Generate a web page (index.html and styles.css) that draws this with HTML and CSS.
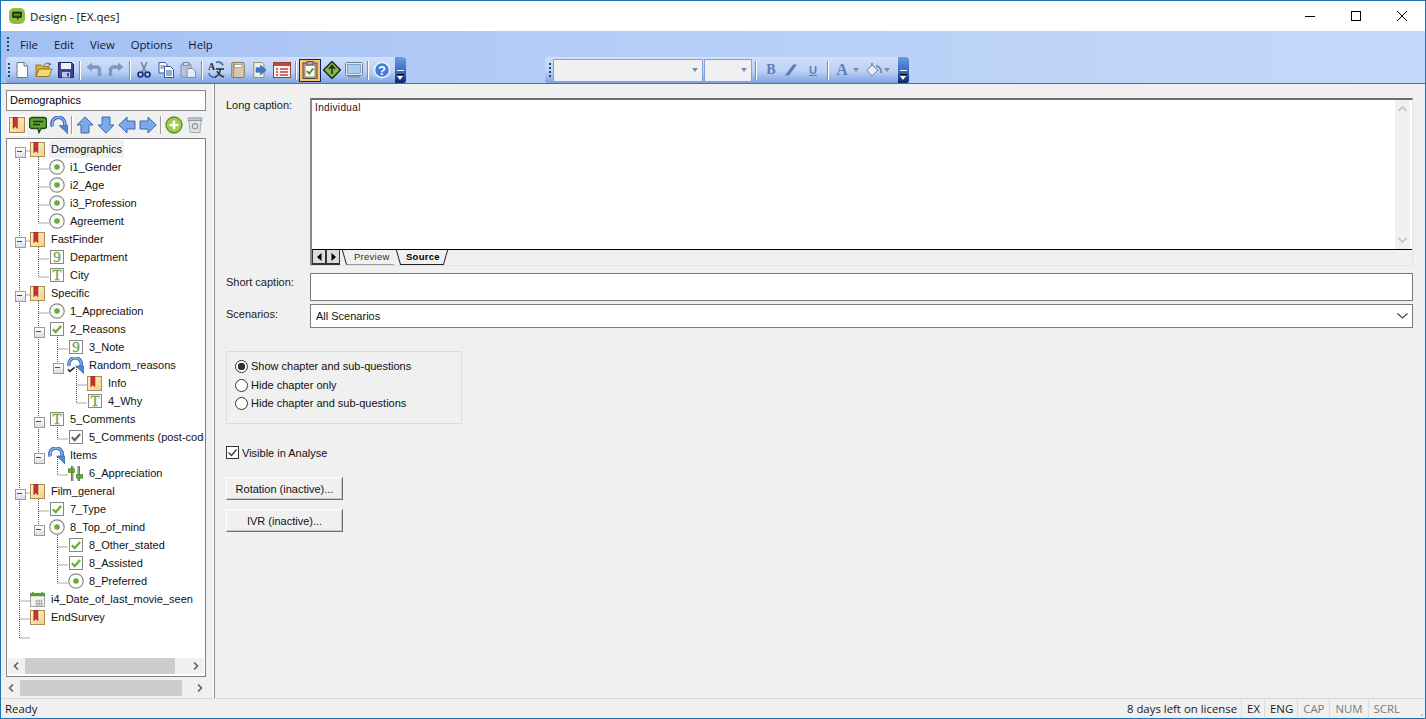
FILE: index.html
```html
<!DOCTYPE html>
<html lang="en">
<head>
<meta charset="utf-8">
<title>Design - [EX.qes]</title>
<link rel="stylesheet" href="styles.css">
</head>
<body>
<svg class="defs" width="0" height="0" aria-hidden="true">
<defs>
<linearGradient id="tan" x1="0" y1="0" x2="1" y2="1"><stop offset="0" stop-color="#fff4cf"/><stop offset="1" stop-color="#f3cf86"/></linearGradient>
<symbol id="i-book" viewBox="0 0 16 16"><rect x=".5" y=".5" width="15" height="15" fill="url(#tan)" stroke="#a9874f"/><path d="M4 0h4.500v11.500L6.200 9.500 4 11.500z" fill="#c8342e" stroke="#8e1f1c" stroke-width=".5"/></symbol>
<symbol id="i-radio" viewBox="0 0 16 16"><circle cx="8" cy="8" r="7.200" fill="#fdfdfd" stroke="#8a8a8a" stroke-width="1.200"/><circle cx="8" cy="8" r="2.800" fill="#6cab3a"/></symbol>
<symbol id="i-check" viewBox="0 0 14 14"><rect x=".5" y=".5" width="13" height="13" fill="#fdfdfd" stroke="#888"/><path d="M2.800 7.200l2.900 2.900 5.400-6" fill="none" stroke="#6cab3a" stroke-width="2.200"/></symbol>
<symbol id="i-gcheck" viewBox="0 0 14 14"><rect x=".5" y=".5" width="13" height="13" fill="#fdfdfd" stroke="#888"/><path d="M2.800 7.200l2.900 2.900 5.400-6" fill="none" stroke="#666" stroke-width="2.200"/></symbol>
<symbol id="i-nine" viewBox="0 0 14 14"><rect x=".5" y=".5" width="13" height="13" fill="#fdfdfd" stroke="#888"/><text x="7" y="11.500" class="glyph">9</text></symbol>
<symbol id="i-t" viewBox="0 0 14 14"><rect x=".5" y=".5" width="13" height="13" fill="#fdfdfd" stroke="#888"/><text x="7" y="11.500" class="glyph">T</text></symbol>
<symbol id="i-loop" viewBox="0 0 18 18"><path d="M2.500 10A6.500 6.500 0 1 1 14.500 10" fill="none" stroke="#2f62ad" stroke-width="3.600"/><path d="M2.500 10A6.500 6.500 0 1 1 14.500 10" fill="none" stroke="#8db7ec" stroke-width="1.600"/><path d="M9 9.500h9v8.500z" fill="#4f86d2" stroke="#2f62ad" stroke-width=".6"/></symbol>
<symbol id="i-loopcheck" viewBox="0 0 18 18"><path d="M2.500 9.500A6.500 6.500 0 1 1 14.500 10" fill="none" stroke="#2f62ad" stroke-width="3.600"/><path d="M2.500 9.500A6.500 6.500 0 1 1 14.500 10" fill="none" stroke="#8db7ec" stroke-width="1.600"/><path d="M9 9.500h9v8.500z" fill="#4f86d2" stroke="#2f62ad" stroke-width=".6"/><path d="M1 13l2.200 2.200L8 11" fill="none" stroke="#333" stroke-width="1.800"/></symbol>
<symbol id="i-slider" viewBox="0 0 16 16"><path d="M4.500 0v16M11.500 0v16" stroke="#444" stroke-width="2.400"/><path d="M4.500 0v16M11.500 0v16" stroke="#ddd" stroke-width=".8"/><rect x="0" y="3" width="7" height="4" fill="#62a92e" stroke="#3e7c1a" stroke-width=".6"/><rect x="9" y="9" width="7" height="4" fill="#62a92e" stroke="#3e7c1a" stroke-width=".6"/></symbol>
<symbol id="i-cal" viewBox="0 0 16 16"><rect x=".5" y="1.500" width="15" height="14" fill="#f4f4f4" stroke="#999"/><rect x="0" y="1" width="16" height="3.500" fill="#55a12a"/><path d="M3 0v2M13 0v2" stroke="#55a12a" stroke-width="1.600"/><path d="M5.500 9.500h8M5.500 12h8M5.500 14h8M7.500 8v6M10 8v6M12.500 8v6" stroke="#9a9a9a" stroke-width=".8" fill="none"/></symbol>
<symbol id="t-new" viewBox="0 0 16 16"><path d="M3 .5h7l3.500 3.500v11.500H3z" fill="#fdfdfd" stroke="#6d7a8c"/><path d="M10 .5V4h3.500" fill="#d7e2f2" stroke="#6d7a8c"/></symbol>
<symbol id="t-open" viewBox="0 0 18 16"><path d="M1 3h5l1.500 1.500H14V7H4L1 14z" fill="#e2b340" stroke="#9b7420"/><path d="M1 14.500l3-7.500h13l-3 7.500z" fill="#f8d873" stroke="#9b7420"/><path d="M9 3.500C10 1 13 .5 15 2" fill="none" stroke="#567" stroke-width="1"/><path d="M14 .5l2.500 2-3 1z" fill="#567"/></symbol>
<symbol id="t-save" viewBox="0 0 16 16"><path d="M.5.5h13l2 2v13H.5z" fill="#43439b" stroke="#23235f"/><rect x="3" y="1" width="10" height="6" fill="#eef1fa"/><rect x="4" y="10" width="8" height="5.500" fill="#c3c6dd"/><rect x="9" y="11" width="2" height="3.500" fill="#43439b"/></symbol>
<symbol id="t-undo" viewBox="0 0 16 16"><path d="M13.500 14V8A3 3 0 0 0 10.500 5H3" fill="none" stroke="#8098bd" stroke-width="3.400"/><path d="M6 .5v9L.5 5z" fill="#8098bd"/></symbol>
<symbol id="t-redo" viewBox="0 0 16 16"><path d="M2.500 14V8A3 3 0 0 1 5.500 5H13" fill="none" stroke="#8098bd" stroke-width="3.400"/><path d="M10 .5v9L15.500 5z" fill="#8098bd"/></symbol>
<symbol id="t-cut" viewBox="0 0 16 16"><path d="M5 0l4.800 10M11 0L6.200 10" stroke="#77808c" stroke-width="1.500"/><circle cx="4.500" cy="12.500" r="2.500" fill="none" stroke="#1f2a78" stroke-width="1.600"/><circle cx="11.500" cy="12.500" r="2.500" fill="none" stroke="#1f2a78" stroke-width="1.600"/></symbol>
<symbol id="t-copy" viewBox="0 0 16 16"><path d="M1 .5h6l2 2V11H1z" fill="#fff" stroke="#34549c"/><path d="M6.500 4.500h6l3 3v8h-9z" fill="#fff" stroke="#34549c"/><path d="M8 9h6M8 11h6M8 13h6M2.500 4h4M2.500 6h3" stroke="#34549c"/></symbol>
<symbol id="t-paste" viewBox="0 0 16 16"><rect x="1" y="2" width="10" height="13" rx="1" fill="#b7c3d8" stroke="#7d8ca8"/><rect x="3.500" y=".5" width="5" height="3" fill="#d4dce9" stroke="#7d8ca8"/><path d="M7 6.500h6l2.500 2.500v6.500H7z" fill="#e6ebf3" stroke="#7d8ca8"/></symbol>
<symbol id="t-trans" viewBox="0 0 18 18"><text x="1" y="9" class="tglyph">A</text><path d="M9 1.500a5 5 0 0 1 7 3" fill="none" stroke="#3d74c0" stroke-width="1.800"/><path d="M2 12a5 5 0 0 0 7 4" fill="none" stroke="#3d74c0" stroke-width="1.800"/><path d="M9 8h8M13 8v2c0 2-2 5-5 6M10 10c1 3 4 5 7 6" fill="none" stroke="#2b2b2b" stroke-width="1.400"/></symbol>
<symbol id="t-book2" viewBox="0 0 16 18"><rect x="1" y=".5" width="14" height="17" rx="1" fill="#d8c7aa" stroke="#7b6a50"/><rect x="4" y="3" width="8" height="3" fill="#fff" stroke="#8c7a5f" stroke-width=".6"/><path d="M3 .5v17" stroke="#9c8a6c"/></symbol>
<symbol id="t-export" viewBox="0 0 17 18"><path d="M1.500.5h9l2.500 2.500v14.500H1.500z" fill="#f3efe3" stroke="#8a7f68"/><path d="M4 6.500h5V3.500L15.500 9 9 14.500v-3H4z" fill="#3f79cc" stroke="#2a5aa0" stroke-width=".6"/></symbol>
<symbol id="t-form" viewBox="0 0 18 16"><rect x=".5" y=".5" width="17" height="15" fill="#fbf3ee" stroke="#9a4137"/><rect x="1" y="1" width="16" height="3" fill="#c4483b"/><path d="M3 7h2M7 7h8M3 10h2M7 10h8M3 13h2M7 13h8" stroke="#bb4a3e" stroke-width="1.300"/></symbol>
<symbol id="t-clip" viewBox="0 0 16 18"><rect x="1" y="2" width="14" height="15.500" fill="#c4a47b" stroke="#5f4a31"/><rect x="3" y="4" width="10" height="12" fill="#fdfdfd" stroke="#887"/><rect x="5" y=".5" width="6" height="3.500" fill="#aab" stroke="#556"/><path d="M4.800 10l2.500 2.500 4-5" fill="none" stroke="#4b9a2d" stroke-width="2"/></symbol>
<symbol id="t-diamond" viewBox="0 0 18 18"><path d="M9 .5L17.500 9 9 17.500.5 9z" fill="#83b84a" stroke="#222" stroke-width="1.400"/><path d="M9 13V5M6 8l3-3.500L12 8" fill="none" stroke="#1e2e12" stroke-width="1.600"/></symbol>
<symbol id="t-mon" viewBox="0 0 18 16"><rect x=".5" y=".5" width="17" height="13" rx="1" fill="#e3e9f2" stroke="#6f7f95"/><rect x="2.500" y="2.500" width="13" height="9" fill="#a5cdf0" stroke="#5d7ea6" stroke-width=".6"/><rect x="3" y="14" width="12" height="1.800" fill="#8b98aa"/></symbol>
<symbol id="t-help" viewBox="0 0 18 18"><circle cx="9" cy="9" r="7.600" fill="#3f7ddb" stroke="#e4eefb" stroke-width="1.800"/><text x="9" y="13.500" class="qglyph">?</text></symbol>
<symbol id="p-ring" viewBox="0 0 18 18"><path d="M2.500 10.500A6.500 6.500 0 1 1 14.500 10" fill="none" stroke="#2f62ad" stroke-width="3.400"/><path d="M2.500 10.500A6.500 6.500 0 1 1 14.500 10" fill="none" stroke="#93bcef" stroke-width="1.400"/><path d="M9 9.500h9v8.500z" fill="#4f86d2" stroke="#2f62ad" stroke-width=".6"/></symbol>
<symbol id="p-bubble" viewBox="0 0 18 18"><path d="M3 1.500h12A2.500 2.500 0 0 1 17.500 4v6a2.500 2.500 0 0 1-2.500 2.500h-3L10 16.500l-1-4H3A2.500 2.500 0 0 1 .5 10V4A2.500 2.500 0 0 1 3 1.500z" fill="#5fa334" stroke="#1d4a1a" stroke-width="1.400"/><path d="M4 5.500h10M4 8.500h7" stroke="#1d3d10" stroke-width="1.600"/></symbol>
<symbol id="p-up" viewBox="0 0 18 18"><path d="M9 .8L17 9h-4v8H5V9H1z" fill="#7ea9e8" stroke="#3a69b3"/></symbol>
<symbol id="p-plus" viewBox="0 0 18 18"><circle cx="9" cy="9" r="8" fill="#9ecb4b" stroke="#5f8c22" stroke-width="1.300"/><path d="M9 4.500v9M4.500 9h9" stroke="#fff" stroke-width="2.400"/></symbol>
<symbol id="p-bin" viewBox="0 0 16 18"><path d="M1 3h14l-1.500 14.500h-11z" fill="#dfe4e8" stroke="#9aa2a9"/><rect x=".5" y="1" width="15" height="3" fill="#c4cad0" stroke="#8e969d"/><circle cx="8" cy="10.500" r="3" fill="none" stroke="#8e969d" stroke-width="1.300"/></symbol>
</defs>
</svg>

<div class="window">
  <header class="titlebar">
    <svg class="applogo" viewBox="0 0 16 16" width="16" height="16"><rect width="16" height="16" rx="5" fill="#8cc044"/><path d="M4.500 3.500h7a1.500 1.500 0 0 1 1.500 1.500v3.500a1.500 1.500 0 0 1-1.500 1.500H10l-2 2.200V10H4.500A1.500 1.500 0 0 1 3 8.500V5a1.500 1.500 0 0 1 1.500-1.500z" fill="#2b3a21"/><path d="M5 6.800h6" stroke="#8cc044" stroke-width="1.200"/></svg>
    <span class="title">Design - [EX.qes]</span>
    <div class="winctl">
      <span class="winbtn"><svg width="10" height="10" viewBox="0 0 10 10"><path d="M0 5.500h10" stroke="#000"/></svg></span>
      <span class="winbtn"><svg width="10" height="10" viewBox="0 0 10 10"><rect x=".5" y=".5" width="9" height="9" fill="none" stroke="#000"/></svg></span>
      <span class="winbtn"><svg width="10" height="10" viewBox="0 0 10 10"><path d="M0 0l10 10M10 0L0 10" stroke="#000"/></svg></span>
    </div>
  </header>

  <div class="band">
    <nav class="menubar">
      <span class="grip"></span>
      <span class="menuitem">File</span>
      <span class="menuitem">Edit</span>
      <span class="menuitem">View</span>
      <span class="menuitem">Options</span>
      <span class="menuitem">Help</span>
    </nav>
    <div class="toolrow">
      <div class="toolbar tb-main">
        <span class="grip"></span>
        <span class="tool"><svg class="tic"><use href="#t-new"/></svg></span>
        <span class="tool"><svg class="tic wide"><use href="#t-open"/></svg></span>
        <span class="tool"><svg class="tic"><use href="#t-save"/></svg></span>
        <span class="tsep"></span>
        <span class="tool"><svg class="tic"><use href="#t-undo"/></svg></span>
        <span class="tool"><svg class="tic"><use href="#t-redo"/></svg></span>
        <span class="tsep"></span>
        <span class="tool"><svg class="tic"><use href="#t-cut"/></svg></span>
        <span class="tool"><svg class="tic"><use href="#t-copy"/></svg></span>
        <span class="tool"><svg class="tic"><use href="#t-paste"/></svg></span>
        <span class="tsep"></span>
        <span class="tool"><svg class="tic wide"><use href="#t-trans"/></svg></span>
        <span class="tool"><svg class="tic"><use href="#t-book2"/></svg></span>
        <span class="tool"><svg class="tic"><use href="#t-export"/></svg></span>
        <span class="tool"><svg class="tic wide"><use href="#t-form"/></svg></span>
        <span class="tsep"></span>
        <span class="tool active"><svg class="tic wide"><use href="#t-clip"/></svg></span>
        <span class="tool"><svg class="tic wide"><use href="#t-diamond"/></svg></span>
        <span class="tool"><svg class="tic wide"><use href="#t-mon"/></svg></span>
        <span class="tsep"></span>
        <span class="tool"><svg class="tic wide"><use href="#t-help"/></svg></span>
        <span class="overflow"></span>
      </div>
      <div class="toolbar tb-format">
        <span class="grip"></span>
        <span class="fcombo fc-font"><i class="caret"></i></span>
        <span class="fcombo fc-size"><i class="caret"></i></span>
        <span class="tsep fsep"></span>
        <span class="ftool fb">B</span>
        <span class="ftool fi"><svg width="14" height="12" viewBox="0 0 14 12"><path d="M1 11.500h4L13 .5H9z" fill="#5f7fb4"/></svg></span>
        <span class="ftool fu">U</span>
        <span class="tsep"></span>
        <span class="ftool fa">A</span><i class="caret gray"></i>
        <span class="ftool ffill"><svg width="16" height="15" viewBox="0 0 16 15"><path d="M6 2L1 7.500 6 13l6-6z" fill="#e8edf5" stroke="#6a7aa0"/><path d="M6 2V0M10 3c3 0 4 2 5 4v3" fill="none" stroke="#6a7aa0" stroke-width="1.500"/></svg></span><i class="caret gray"></i>
        <span class="overflow"></span>
      </div>
    </div>
  </div>

  <main class="main">
    <aside class="left">
      <div class="nameinput">Demographics</div>
      <div class="palette">
        <span class="pal on"><svg class="pic"><use href="#i-book"/></svg></span>
        <span class="pal"><svg class="pic big"><use href="#p-bubble"/></svg></span>
        <span class="pal"><svg class="pic big"><use href="#p-ring"/></svg></span>
        <span class="psep"></span>
        <span class="pal"><svg class="pic big"><use href="#p-up"/></svg></span>
        <span class="pal"><svg class="pic big rot180"><use href="#p-up"/></svg></span>
        <span class="pal"><svg class="pic big rot270"><use href="#p-up"/></svg></span>
        <span class="pal"><svg class="pic big rot90"><use href="#p-up"/></svg></span>
        <span class="psep"></span>
        <span class="pal"><svg class="pic big"><use href="#p-plus"/></svg></span>
        <span class="pal"><svg class="pic"><use href="#p-bin"/></svg></span>
      </div>
      <div class="treebox">
        <div class="treeview">
          <svg class="connectors" width="197" height="510" viewBox="0 0 197 510">
            <path class="dots" d="M12.500 11V498M12.500 11H23M12.500 101H23M12.500 155H23M12.500 353H23M12.500 461H23M12.500 479H23M12.500 498H23"/>
            <path class="dots" d="M31.500 11V83M31.500 29H42M31.500 47H42M31.500 65H42M31.500 83H42M31.500 101V137M31.500 119H42M31.500 137H42M31.500 155V317M31.500 173H42M31.500 191H27M31.500 281H27M31.500 317H27M31.500 353V389M31.500 371H42M31.500 389H27"/>
            <path class="dots" d="M50.500 191V227M50.500 209H61M50.500 227H46M50.500 281V299M50.500 299H61M50.500 317V335M50.500 335H61M50.500 389V443M50.500 407H61M50.500 425H61M50.500 443H61"/>
            <path class="dots" d="M69.500 227V263M69.500 245H80M69.500 263H80"/>
          </svg>
          <ul class="tree">
            <li class="node l0 exp sel"><svg class="nic"><use href="#i-book"/></svg><span class="lbl">Demographics</span></li>
            <li class="node l1"><svg class="nic rd"><use href="#i-radio"/></svg><span class="lbl">i1_Gender</span></li>
            <li class="node l1"><svg class="nic rd"><use href="#i-radio"/></svg><span class="lbl">i2_Age</span></li>
            <li class="node l1"><svg class="nic rd"><use href="#i-radio"/></svg><span class="lbl">i3_Profession</span></li>
            <li class="node l1"><svg class="nic rd"><use href="#i-radio"/></svg><span class="lbl">Agreement</span></li>
            <li class="node l0 exp"><svg class="nic"><use href="#i-book"/></svg><span class="lbl">FastFinder</span></li>
            <li class="node l1"><svg class="nic sq"><use href="#i-nine"/></svg><span class="lbl">Department</span></li>
            <li class="node l1"><svg class="nic sq"><use href="#i-t"/></svg><span class="lbl">City</span></li>
            <li class="node l0 exp"><svg class="nic"><use href="#i-book"/></svg><span class="lbl">Specific</span></li>
            <li class="node l1"><svg class="nic rd"><use href="#i-radio"/></svg><span class="lbl">1_Appreciation</span></li>
            <li class="node l1 exp"><svg class="nic sq"><use href="#i-check"/></svg><span class="lbl">2_Reasons</span></li>
            <li class="node l2"><svg class="nic sq"><use href="#i-nine"/></svg><span class="lbl">3_Note</span></li>
            <li class="node l2 exp"><svg class="nic big"><use href="#i-loopcheck"/></svg><span class="lbl">Random_reasons</span></li>
            <li class="node l3"><svg class="nic"><use href="#i-book"/></svg><span class="lbl">Info</span></li>
            <li class="node l3"><svg class="nic sq"><use href="#i-t"/></svg><span class="lbl">4_Why</span></li>
            <li class="node l1 exp"><svg class="nic sq"><use href="#i-t"/></svg><span class="lbl">5_Comments</span></li>
            <li class="node l2"><svg class="nic sq"><use href="#i-gcheck"/></svg><span class="lbl">5_Comments (post-code)</span></li>
            <li class="node l1 exp"><svg class="nic big"><use href="#i-loop"/></svg><span class="lbl">Items</span></li>
            <li class="node l2"><svg class="nic"><use href="#i-slider"/></svg><span class="lbl">6_Appreciation</span></li>
            <li class="node l0 exp"><svg class="nic"><use href="#i-book"/></svg><span class="lbl">Film_general</span></li>
            <li class="node l1"><svg class="nic sq"><use href="#i-check"/></svg><span class="lbl">7_Type</span></li>
            <li class="node l1 exp"><svg class="nic rd"><use href="#i-radio"/></svg><span class="lbl">8_Top_of_mind</span></li>
            <li class="node l2"><svg class="nic sq"><use href="#i-check"/></svg><span class="lbl">8_Other_stated</span></li>
            <li class="node l2"><svg class="nic sq"><use href="#i-check"/></svg><span class="lbl">8_Assisted</span></li>
            <li class="node l2"><svg class="nic rd"><use href="#i-radio"/></svg><span class="lbl">8_Preferred</span></li>
            <li class="node l0"><svg class="nic"><use href="#i-cal"/></svg><span class="lbl">i4_Date_of_last_movie_seen</span></li>
            <li class="node l0"><svg class="nic"><use href="#i-book"/></svg><span class="lbl">EndSurvey</span></li>
          </ul>
        </div>
        <div class="hscroll inner">
          <svg class="arrow" width="6" height="8" viewBox="0 0 6 8"><path d="M5 .5L1.500 4 5 7.500" fill="none" stroke="#606060" stroke-width="1.600"/></svg>
          <span class="thumb"></span>
          <svg class="arrow" width="6" height="8" viewBox="0 0 6 8"><path d="M1 .5L4.500 4 1 7.500" fill="none" stroke="#606060" stroke-width="1.600"/></svg>
        </div>
      </div>
      <div class="hscroll outer">
        <svg class="arrow" width="6" height="8" viewBox="0 0 6 8"><path d="M5 .5L1.500 4 5 7.500" fill="none" stroke="#606060" stroke-width="1.600"/></svg>
        <span class="thumb"></span>
        <svg class="arrow" width="6" height="8" viewBox="0 0 6 8"><path d="M1 .5L4.500 4 1 7.500" fill="none" stroke="#606060" stroke-width="1.600"/></svg>
      </div>
    </aside>

    <section class="right">
      <div class="field field-long">
        <label class="flabel">Long caption:</label>
        <div class="editor">
          <div class="editor-main">
            <div class="editor-text">Individual</div>
            <div class="vscroll">
              <svg width="9" height="6" viewBox="0 0 9 6"><path d="M.5 5L4.500 1 8.500 5" fill="none" stroke="#c2c2c2" stroke-width="1.600"/></svg>
              <svg width="9" height="6" viewBox="0 0 9 6"><path d="M.5 1L4.500 5 8.500 1" fill="none" stroke="#c2c2c2" stroke-width="1.600"/></svg>
            </div>
          </div>
          <div class="tabsrow">
            <span class="tabnav"><svg width="5" height="8" viewBox="0 0 5 8"><path d="M4.500 0v8L0 4z"/></svg></span>
            <span class="tabnav"><svg width="5" height="8" viewBox="0 0 5 8"><path d="M.5 0v8L5 4z"/></svg></span>
            <span class="tab">Preview</span>
            <span class="tab current">Source</span>
          </div>
        </div>
      </div>
      <div class="field field-short">
        <label class="flabel">Short caption:</label>
        <div class="textbox"></div>
      </div>
      <div class="field field-scen">
        <label class="flabel">Scenarios:</label>
        <div class="textbox combo">All Scenarios
          <svg width="11" height="6" viewBox="0 0 11 6"><path d="M.5.500l5 4.500 5-4.500" fill="none" stroke="#444" stroke-width="1.200"/></svg>
        </div>
      </div>
      <div class="groupbox">
        <div class="radio on"><i class="rdot"></i>Show chapter and sub-questions</div>
        <div class="radio"><i class="rdot"></i>Hide chapter only</div>
        <div class="radio"><i class="rdot"></i>Hide chapter and sub-questions</div>
      </div>
      <div class="checkline"><svg class="cbox" width="13" height="13" viewBox="0 0 13 13"><rect x=".5" y=".5" width="12" height="12" fill="#fff" stroke="#333"/><path d="M2.500 6.500l3 3 5-6" fill="none" stroke="#333" stroke-width="1.200"/></svg>Visible in Analyse</div>
      <button class="btn" type="button">Rotation (inactive)...</button>
      <button class="btn" type="button">IVR (inactive)...</button>
    </section>
  </main>

  <footer class="status">
    <span class="st-ready">Ready</span>
    <span class="pane tight">8 days left on license</span>
    <span class="pane tight">EX</span>
    <span class="pane tight">ENG</span>
    <span class="pane off">CAP</span>
    <span class="pane off">NUM</span>
    <span class="pane off">SCRL</span>
    <span class="sizer"></span>
  </footer>
</div>
</body>
</html>
```

FILE: styles.css
```css
* { box-sizing: border-box; }
html, body { margin: 0; padding: 0; height: 100%; overflow: hidden; }
body { font-family: "Liberation Sans", Arial, sans-serif; font-size: 11px; color: #000; background: #f0f0f0; }
.defs { position: absolute; }
.glyph { font-family: "Liberation Serif", serif; font-size: 15px; font-weight: 400; fill: #6fa548; stroke: #6fa548; stroke-width: .3; text-anchor: middle; }
.tglyph { font-family: "Liberation Serif", serif; font-size: 10px; font-weight: 700; fill: #2b2b2b; }
.qglyph { font-family: "Liberation Sans", sans-serif; font-size: 13px; font-weight: 700; fill: #fff; text-anchor: middle; }

.window { width: 1426px; height: 719px; border: 1px solid #1a73b8; display: flex; flex-direction: column; background: #f0f0f0; }

.titlebar { height: 30px; flex: none; background: #fff; display: flex; align-items: center; padding-left: 8px; font-family: "Open Sans", sans-serif; font-size: 11.6px; }
.applogo { margin-right: 5px; }
.title { color: #111; }
.winctl { margin-left: auto; display: flex; margin-right: 0; }
.winbtn { width: 46px; height: 30px; display: flex; align-items: center; justify-content: center; }

.band { height: 53px; flex: none; background: linear-gradient(90deg, #a3c0f3 0%, #b4cdf6 40%, #c4d9f9 100%); display: flex; flex-direction: column; border-bottom: 1px solid #6b6b6b; }
.menubar { height: 26px; flex: none; display: flex; align-items: center; padding-left: 6px; font-family: "Open Sans", sans-serif; font-size: 11.3px; color: #0b1a33; }
.grip { width: 2px; height: 15px; margin-right: 3px; flex: none; background: repeating-linear-gradient(180deg, #27417a 0 2px, transparent 2px 4px); }
.menuitem { padding: 0 8px; }
.menuitem:first-of-type { padding-left: 6px; }

.toolrow { height: 26px; flex: none; display: flex; padding-left: 5px; }
.toolbar { height: 26px; display: flex; align-items: center; background: linear-gradient(180deg, #d0e0fb 0%, #bcd1f6 55%, #7da2e0 100%); border-radius: 3px 0 0 3px; padding-left: 2px; }
.tb-main { width: 400px; padding-right: 0; }
.tb-format { width: 364px; margin-left: 139px; }
.toolbar .grip { margin-right: 0; }
.tb-main .grip { margin-right: 1px; margin-left: 0; }
.tool { width: 22px; height: 23px; flex: none; display: flex; align-items: center; justify-content: center; }
.tool.active { background: #fbc470; outline: 1px solid #14235e; outline-offset: -1px; }
.tic { width: 16px; height: 16px; }
.tic.wide { width: 18px; height: 18px; }
.tsep { width: 6px; height: 19px; flex: none; background: linear-gradient(90deg, transparent 2px, #6f8fc6 2px, #6f8fc6 3px, #fff 3px, #fff 4px, transparent 4px); }
.overflow { width: 11px; height: 26px; margin-left: auto; flex: none; background: linear-gradient(180deg, #6e9be0 0%, #3163c2 60%, #08266b 100%); border-radius: 0 3px 3px 0; position: relative; }
.overflow::before { content: ""; position: absolute; left: 2px; bottom: 8px; width: 7px; height: 3px; border-top: 1px solid #fff; border-bottom: 1px solid #000; }
.overflow::after { content: ""; position: absolute; left: 2px; bottom: 3px; width: 0; height: 0; border-left: 3.5px solid transparent; border-right: 3.5px solid transparent; border-top: 4px solid #fff; }

.tb-main .overflow { margin-left: 2px; }
.tb-format .grip { margin-left: 2px; margin-right: 2px; }
.fcombo { height: 23px; background: #f0f0f0; border: 1px solid #7ea2dd; display: flex; align-items: center; justify-content: flex-end; padding-right: 4px; flex: none; }
.fc-font { width: 150px; }
.fc-size { width: 48px; margin-left: 1px; }
.caret { width: 0; height: 0; flex: none; border-left: 3.5px solid transparent; border-right: 3.5px solid transparent; border-top: 4px solid #6c8cc0; }
.caret.gray { border-top-color: #8a8a8a; }
.fsep { margin-left: 1px; }
.ftool { font-family: "Liberation Serif", serif; font-size: 14px; font-weight: 700; color: #5f7fb4; width: 20px; display: flex; justify-content: center; flex: none; }
.fb { margin-left: 2px; }
.fu { font-family: "Liberation Sans", sans-serif; font-size: 11px; text-decoration: underline; width: 24px; }
.fa { font-size: 16px; width: 22px; }
.ffill { margin-left: 5px; }

.main { flex: 1; min-height: 0; display: flex; }

.left { width: 213px; flex: none; padding: 6px 0 0 5px; display: flex; flex-direction: column; border-right: 1px solid #fff; }
.nameinput { width: 200px; height: 21px; flex: none; background: #fff; border: 1px solid #8a8a8a; padding-left: 3px; line-height: 19px; }
.palette { height: 24px; margin-top: 2px; flex: none; display: flex; align-items: center; padding-left: 1px; }
.pal { width: 21px; height: 21px; flex: none; display: flex; align-items: center; justify-content: center; }
.pal.on { width: 20px; background: #fafafa; }
.psep { width: 2px; height: 18px; margin: 0 1px 0 2px; background: #9a9a9a; border-right: 1px solid #fff; flex: none; }
.pic { width: 16px; height: 16px; }
.pic.big { width: 18px; height: 18px; }
.rot90 { transform: rotate(90deg); }
.rot180 { transform: rotate(180deg); }
.rot270 { transform: rotate(270deg); }

.treebox { flex: none; width: 200px; height: 539px; margin-top: 1px; border: 1px solid #808080; border-left-color: #8a8a8a; background: #fff; display: flex; flex-direction: column; padding: 1px; overflow: hidden; }
.treeview { flex: 1; position: relative; min-height: 0; overflow: hidden; }
.connectors { position: absolute; left: -1px; top: 0; }
.dots { fill: none; stroke: #555; stroke-width: 1; stroke-dasharray: 1 1; }
.tree { list-style: none; margin: 0; padding: 0; position: relative; }
.node { height: 18px; display: flex; align-items: center; white-space: nowrap; position: relative; }
.l0 { padding-left: 22px; }
.l1 { padding-left: 41px; }
.l2 { padding-left: 60px; }
.l3 { padding-left: 79px; }
.nic { width: 15px; height: 15px; flex: none; }
.nic.rd { width: 16px; height: 16px; margin-right: -1px; }
.nic.sq { width: 14px; height: 14px; margin-left: 1px; margin-right: 0; }
.nic.big { width: 17px; height: 17px; margin-left: -1px; margin-right: -1px; }
.lbl { margin-left: 6px; color: #111; padding: 0; }
.sel .lbl { background: #f0f0f0; box-shadow: -2px 0 0 #f0f0f0, 2px 0 0 #f0f0f0; line-height: 18px; }
.exp::before { content: ""; position: absolute; margin-left: -15px; top: 7px; width: 9px; height: 9px; border: 1px solid #9a9a9a; background: linear-gradient(180deg, #fff, #d8dde6); }
.exp::after { content: ""; position: absolute; margin-left: -13px; top: 11px; width: 5px; height: 1px; background: #2a4a8a; }

.hscroll { display: flex; align-items: center; background: #f0f0f0; flex: none; position: relative; }
.hscroll .arrow { flex: none; }
.hscroll.inner { height: 16px; margin: 0 0 1px 0; padding: 0 5px; justify-content: flex-start; }
.hscroll.outer { height: 16px; width: 203px; margin-top: 3px; padding: 0 6px 0 2px; justify-content: flex-start; }
.thumb { height: 100%; background: #cdcdcd; flex: none; }
.inner .thumb { width: 150px; margin: 0 auto 0 6px; }
.outer .thumb { width: 162px; margin: 0 auto 0 6px; }

.right { flex: 1; min-width: 0; padding: 14px 12px 0 11px; border-left: 1px solid #8a8a8a; display: flex; flex-direction: column; align-items: flex-start; }
.field { display: flex; width: 100%; }
.flabel { width: 84px; flex: none; color: #1a1a1a; }
.field-long { height: 168px; }
.field-long .flabel { padding-top: 1px; }
.editor { flex: 1; display: flex; flex-direction: column; border-top: 2px solid #6d6d6d; border-left: 2px solid #8a8a8a; border-right: 1px solid #e2e2e2; border-bottom: 1px solid #e2e2e2; }
.editor-main { flex: 1; display: flex; background: #fff; border-bottom: 1px solid #000; }
.editor-text { flex: 1; padding: 2px 3px; font-size: 10px; letter-spacing: .35px; color: #25121a; }
.vscroll { width: 15px; margin-right: 2px; background: #f0f0f0; display: flex; flex-direction: column; justify-content: space-between; align-items: center; padding: 6px 0 6px; }
.tabsrow { height: 15px; flex: none; display: flex; align-items: center; background: #f0f0f0; font-size: 9.5px; }
.tabnav { width: 14px; height: 15px; background: #dcdcdc; border: 1px solid #333; border-top: 0; border-bottom-width: 2px; display: flex; align-items: center; justify-content: center; flex: none; }
.tab { height: 15px; line-height: 14px; width: 56px; padding-left: 12px; color: #2a3140; letter-spacing: .25px; position: relative; margin-left: 2px; }
.tab::before, .tab::after { content: ""; position: absolute; top: 0; bottom: 0; width: 60%; border-bottom: 1px solid #999; z-index: 0; }
.tab::before { left: 2px; border-left: 1px solid #222; transform: skewX(16deg); }
.tab::after { right: 2px; border-right: 0; transform: skewX(-16deg); }
.tab.current { width: 52px; font-weight: 700; color: #000; margin-left: -2px; padding-left: 10px; }
.tab.current::before, .tab.current::after { border-bottom-color: #222; }
.tab.current::after { border-right: 1px solid #222; }

.field-short { height: 28px; margin-top: 7px; }
.field-short .flabel { padding-top: 3px; }
.field-scen { height: 24px; margin-top: 3px; }
.field-scen .flabel { padding-top: 4px; }
.textbox { flex: 1; background: #fff; border: 1px solid #7a7a7a; }
.combo { display: flex; align-items: center; justify-content: space-between; padding: 0 4px 0 5px; color: #111; }

.groupbox { width: 236px; height: 73px; margin-top: 23px; border: 1px solid #dcdcdc; padding: 5px 0 0 8px; }
.radio { height: 18px; display: flex; align-items: center; color: #111; }
.radio.on { margin-bottom: 1px; }
.rdot { width: 13px; height: 13px; border: 1px solid #333; border-radius: 50%; background: #fff; margin-right: 3px; flex: none; }
.radio.on .rdot { background: radial-gradient(circle, #333 0 3.500px, #fff 4px); }

.checkline { display: flex; align-items: center; margin-top: 22px; height: 13px; color: #111; }
.cbox { margin-right: 3px; }

.btn { width: 117px; height: 23px; font: inherit; color: #111; background: #f0f0f0; border: 1px solid; border-color: #fff #6d6d6d #6d6d6d #fff; padding: 0; box-shadow: inset -1px -1px 0 #c8c8c8; }
.checkline + .btn { margin-top: 18px; }
.btn + .btn { margin-top: 9px; }

.status { height: 20px; flex: none; display: flex; align-items: center; border-top: 1px solid #d8d8d8; background: #f0f0f0; font-family: "Open Sans", sans-serif; font-size: 11.4px; color: #1a1a1a; }
.st-ready { margin-left: 4px; margin-right: auto; }
.pane { padding: 0 5px; border-left: 1px solid #dcdcdc; line-height: 19px; }
.pane:nth-of-type(2) { border-left: 0; }
.pane.tight { padding-right: 4px; }
.pane.off { color: #7a7a7a; }
.sizer { width: 20px; height: 18px; flex: none; background: radial-gradient(circle at 1px 1px, #bdbdbd 1px, transparent 1.200px) right bottom / 4px 4px no-repeat; }
```
